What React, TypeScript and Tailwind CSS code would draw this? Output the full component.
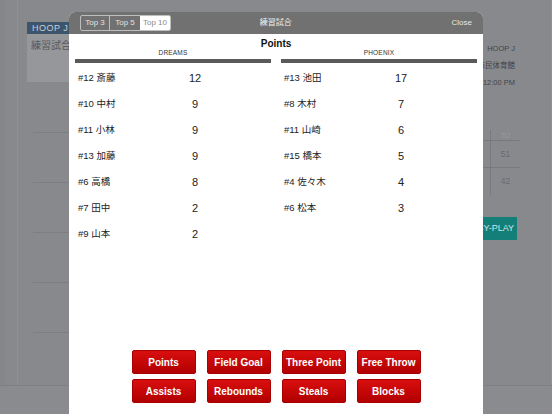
import React from "react";

const font = { fontFamily: '"Liberation Sans", "Noto Sans CJK JP", sans-serif' };

const dreams: [string, number][] = [
  ["#12 斎藤", 12],
  ["#10 中村", 9],
  ["#11 小林", 9],
  ["#13 加藤", 9],
  ["#6 高橋", 8],
  ["#7 田中", 2],
  ["#9 山本", 2],
];
const phoenix: [string, number][] = [
  ["#13 池田", 17],
  ["#8 木村", 7],
  ["#11 山崎", 6],
  ["#15 橋本", 5],
  ["#4 佐々木", 4],
  ["#6 松本", 3],
];

function Column({ team, rows }: { team: string; rows: [string, number][] }) {
  return (
    <div className="flex flex-col w-[196px]">
      <div className="text-[6.5px] leading-[6px] h-[6px] text-center text-[#333] tracking-[0.2px]">{team}</div>
      <div className="mt-[3px] h-[4px] bg-[#5a5a5a]" />
      <div className="mt-[2px] flex flex-col">
        {rows.map(([n, v]) => (
          <div key={n} className="flex items-center h-[26px]">
            <div className="w-[100px] pl-[3px] text-[9.5px] text-[#222]">{n}</div>
            <div className="w-[40px] text-center text-[11px] text-[#222]">{v}</div>
          </div>
        ))}
      </div>
    </div>
  );
}

const btns = [
  ["Points", "Field Goal", "Three Point", "Free Throw"],
  ["Assists", "Rebounds", "Steals", "Blocks"],
];

export default function App() {
  return (
    <div className="relative w-[552px] h-[414px] overflow-hidden bg-[#88898d] flex flex-col" style={font}>
      {/* background page */}
      <div className="flex flex-1">
        <div className="w-[27px] shrink-0 flex">
          <div className="w-[5px] bg-[#85868a]" />
          <div className="w-[13px] border-r border-[#8f9094]" />
        </div>
        <div className="w-[413px] shrink-0 pt-[22px]">
          <div className="w-[200px] h-[12px] bg-[#3d546d] text-[9px] leading-[12px] pl-[5px] text-[#c8d0d8] tracking-[0.5px]">HOOP J</div>
          <div className="w-[200px] h-[48px] bg-[#96979a] text-[10px] pl-[4px] pt-[4px] text-[#58595b]">練習試合</div>
          <div className="pt-[50px] flex flex-col gap-[49px]">
            {[0, 1, 2, 3, 4].map((i) => (
              <div key={i} className="ml-[6px] w-[60px] h-px bg-[#7d7e82]" />
            ))}
          </div>
        </div>
        <div className="w-[112px] shrink-0 flex flex-col items-end pr-[2px] border-r border-[#909195]">
          <div className="pt-[40px] pr-[34px] flex flex-col items-end text-[7.5px] leading-[17px] text-[#434446]">
            <div>HOOP J</div>
            <div>市民体育館</div>
            <div>12:00 PM</div>
          </div>
          <div className="mt-[39px] self-start grid grid-cols-[51px_29px] grid-rows-[11px_27px_27px] text-[#6a6b6e]">
            <div className="border-r border-b border-[#78797d]" />
            <div className="border-b border-[#78797d] text-center text-[7px] italic leading-[11px] text-[#9a9b9e]">TO</div>
            <div className="border-r border-b border-[#78797d]" />
            <div className="border-b border-[#78797d] text-center text-[8.5px] leading-[27px]">51</div>
            <div className="border-r border-[#78797d]" />
            <div className="text-center text-[8.5px] leading-[27px]">42</div>
          </div>
          <div className="mt-[22px] self-start w-[77px] h-[23px] bg-[#137f78] text-[9px] leading-[23px] text-right pr-[3px] text-[#cfe6e3] whitespace-nowrap overflow-hidden">
            PLAY-BY-PLAY
          </div>
        </div>
      </div>
      <div className="h-[29px] border-t border-[#7e7f83] bg-[#8a8b8f]" />

      {/* modal */}
      <div className="absolute left-[69px] top-[12px] w-[414px] bottom-0 flex flex-col bg-white rounded-t-[6px] overflow-hidden">
        <div className="h-[22px] bg-[#717171] flex items-center px-[11px]">
          <div className="flex h-[16px] border border-[#bdbdbd] rounded-[2px] overflow-hidden text-[8px]">
            <div className="w-[29px] flex items-center justify-center text-[#e2e2e2] border-r border-[#bdbdbd]">Top 3</div>
            <div className="w-[30px] flex items-center justify-center text-[#e2e2e2]">Top 5</div>
            <div className="w-[30px] flex items-center justify-center bg-white text-[#8a8a8a]">Top 10</div>
          </div>
          <div className="flex-1 text-center text-[8px] text-[#eeeeee] pr-[71px]">練習試合</div>
          <div className="text-[8px] text-[#e6e6e6]">Close</div>
        </div>
        <div className="pt-[4px] text-center text-[10px] leading-[12px] font-bold text-[#111]">Points</div>
        <div className="flex justify-between px-[6px]">
          <Column team="DREAMS" rows={dreams} />
          <Column team="PHOENIX" rows={phoenix} />
        </div>
        <div className="mt-auto pb-[11px] flex flex-col gap-[5px] items-center">
          {btns.map((row, i) => (
            <div key={i} className="flex gap-[11px]">
              {row.map((b) => (
                <div
                  key={b}
                  className="w-[64px] h-[24px] rounded-[2px] bg-gradient-to-b from-[#d90f0f] to-[#b20000] border border-[#a80000] flex items-center justify-center text-white text-[10px] font-bold"
                >
                  {b}
                </div>
              ))}
            </div>
          ))}
        </div>
      </div>
    </div>
  );
}
